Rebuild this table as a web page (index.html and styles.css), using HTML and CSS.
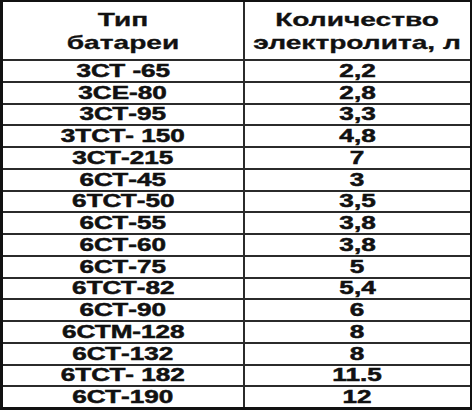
FILE: index.html
```html
<!DOCTYPE html>
<html lang="ru">
<head>
<meta charset="utf-8">
<link rel="stylesheet" href="styles.css">
</head>
<body>
<div class="sheet">
  <div class="cell head"><span class="txt">Тип<br>батареи</span></div>
  <div class="cell head"><span class="txt">Количество<br>электролита, л</span></div>
  <div class="cell"><span class="txt">3СТ -65</span></div><div class="cell"><span class="txt">2,2</span></div>
  <div class="cell"><span class="txt">3СЕ-80</span></div><div class="cell"><span class="txt">2,8</span></div>
  <div class="cell"><span class="txt">3СТ-95</span></div><div class="cell"><span class="txt">3,3</span></div>
  <div class="cell"><span class="txt">3ТСТ- 150</span></div><div class="cell"><span class="txt">4,8</span></div>
  <div class="cell"><span class="txt">3СТ-215</span></div><div class="cell"><span class="txt">7</span></div>
  <div class="cell"><span class="txt">6СТ-45</span></div><div class="cell"><span class="txt">3</span></div>
  <div class="cell"><span class="txt">6ТСТ-50</span></div><div class="cell"><span class="txt">3,5</span></div>
  <div class="cell"><span class="txt">6СТ-55</span></div><div class="cell"><span class="txt">3,8</span></div>
  <div class="cell"><span class="txt">6СТ-60</span></div><div class="cell"><span class="txt">3,8</span></div>
  <div class="cell"><span class="txt">6СТ-75</span></div><div class="cell"><span class="txt">5</span></div>
  <div class="cell"><span class="txt">6ТСТ-82</span></div><div class="cell"><span class="txt">5,4</span></div>
  <div class="cell"><span class="txt">6СТ-90</span></div><div class="cell"><span class="txt">6</span></div>
  <div class="cell"><span class="txt">6СТМ-128</span></div><div class="cell"><span class="txt">8</span></div>
  <div class="cell"><span class="txt">6СТ-132</span></div><div class="cell"><span class="txt">8</span></div>
  <div class="cell"><span class="txt">6ТСТ- 182</span></div><div class="cell"><span class="txt">11.5</span></div>
  <div class="cell"><span class="txt">6СТ-190</span></div><div class="cell"><span class="txt">12</span></div>
</div>
</body>
</html>
```
FILE: styles.css
```css
html, body {
  margin: 0;
  padding: 0;
  background: #ffffff;
}
.sheet {
  box-sizing: border-box;
  width: 472px;
  height: 410px;
  display: grid;
  grid-template-columns: 240px 225px;
  grid-template-rows: 57px repeat(16, 1fr);
  gap: 2px;
  background: #2b2b2b;
  border-left: 3px solid #111;
  border-right: 2px solid #111;
  border-top: 2px solid #111;
  border-bottom: 3px solid #111;
  font-family: "Liberation Sans", Arial, sans-serif;
  color: #111;
}
.cell {
  background: #fff;
  display: flex;
  align-items: center;
  justify-content: center;
  overflow: hidden;
  font-weight: bold;
  font-size: 18px;
  line-height: 1;
}
.txt {
  display: inline-block;
  transform: scaleX(1.45);
  white-space: nowrap;
  text-align: center;
  -webkit-text-stroke: 0.5px #111;
}
.head {
  font-size: 19px;
  line-height: 23px;
}
.head .txt {
  transform: scaleX(1.48);
  -webkit-text-stroke: 0.3px #111;
}
```
